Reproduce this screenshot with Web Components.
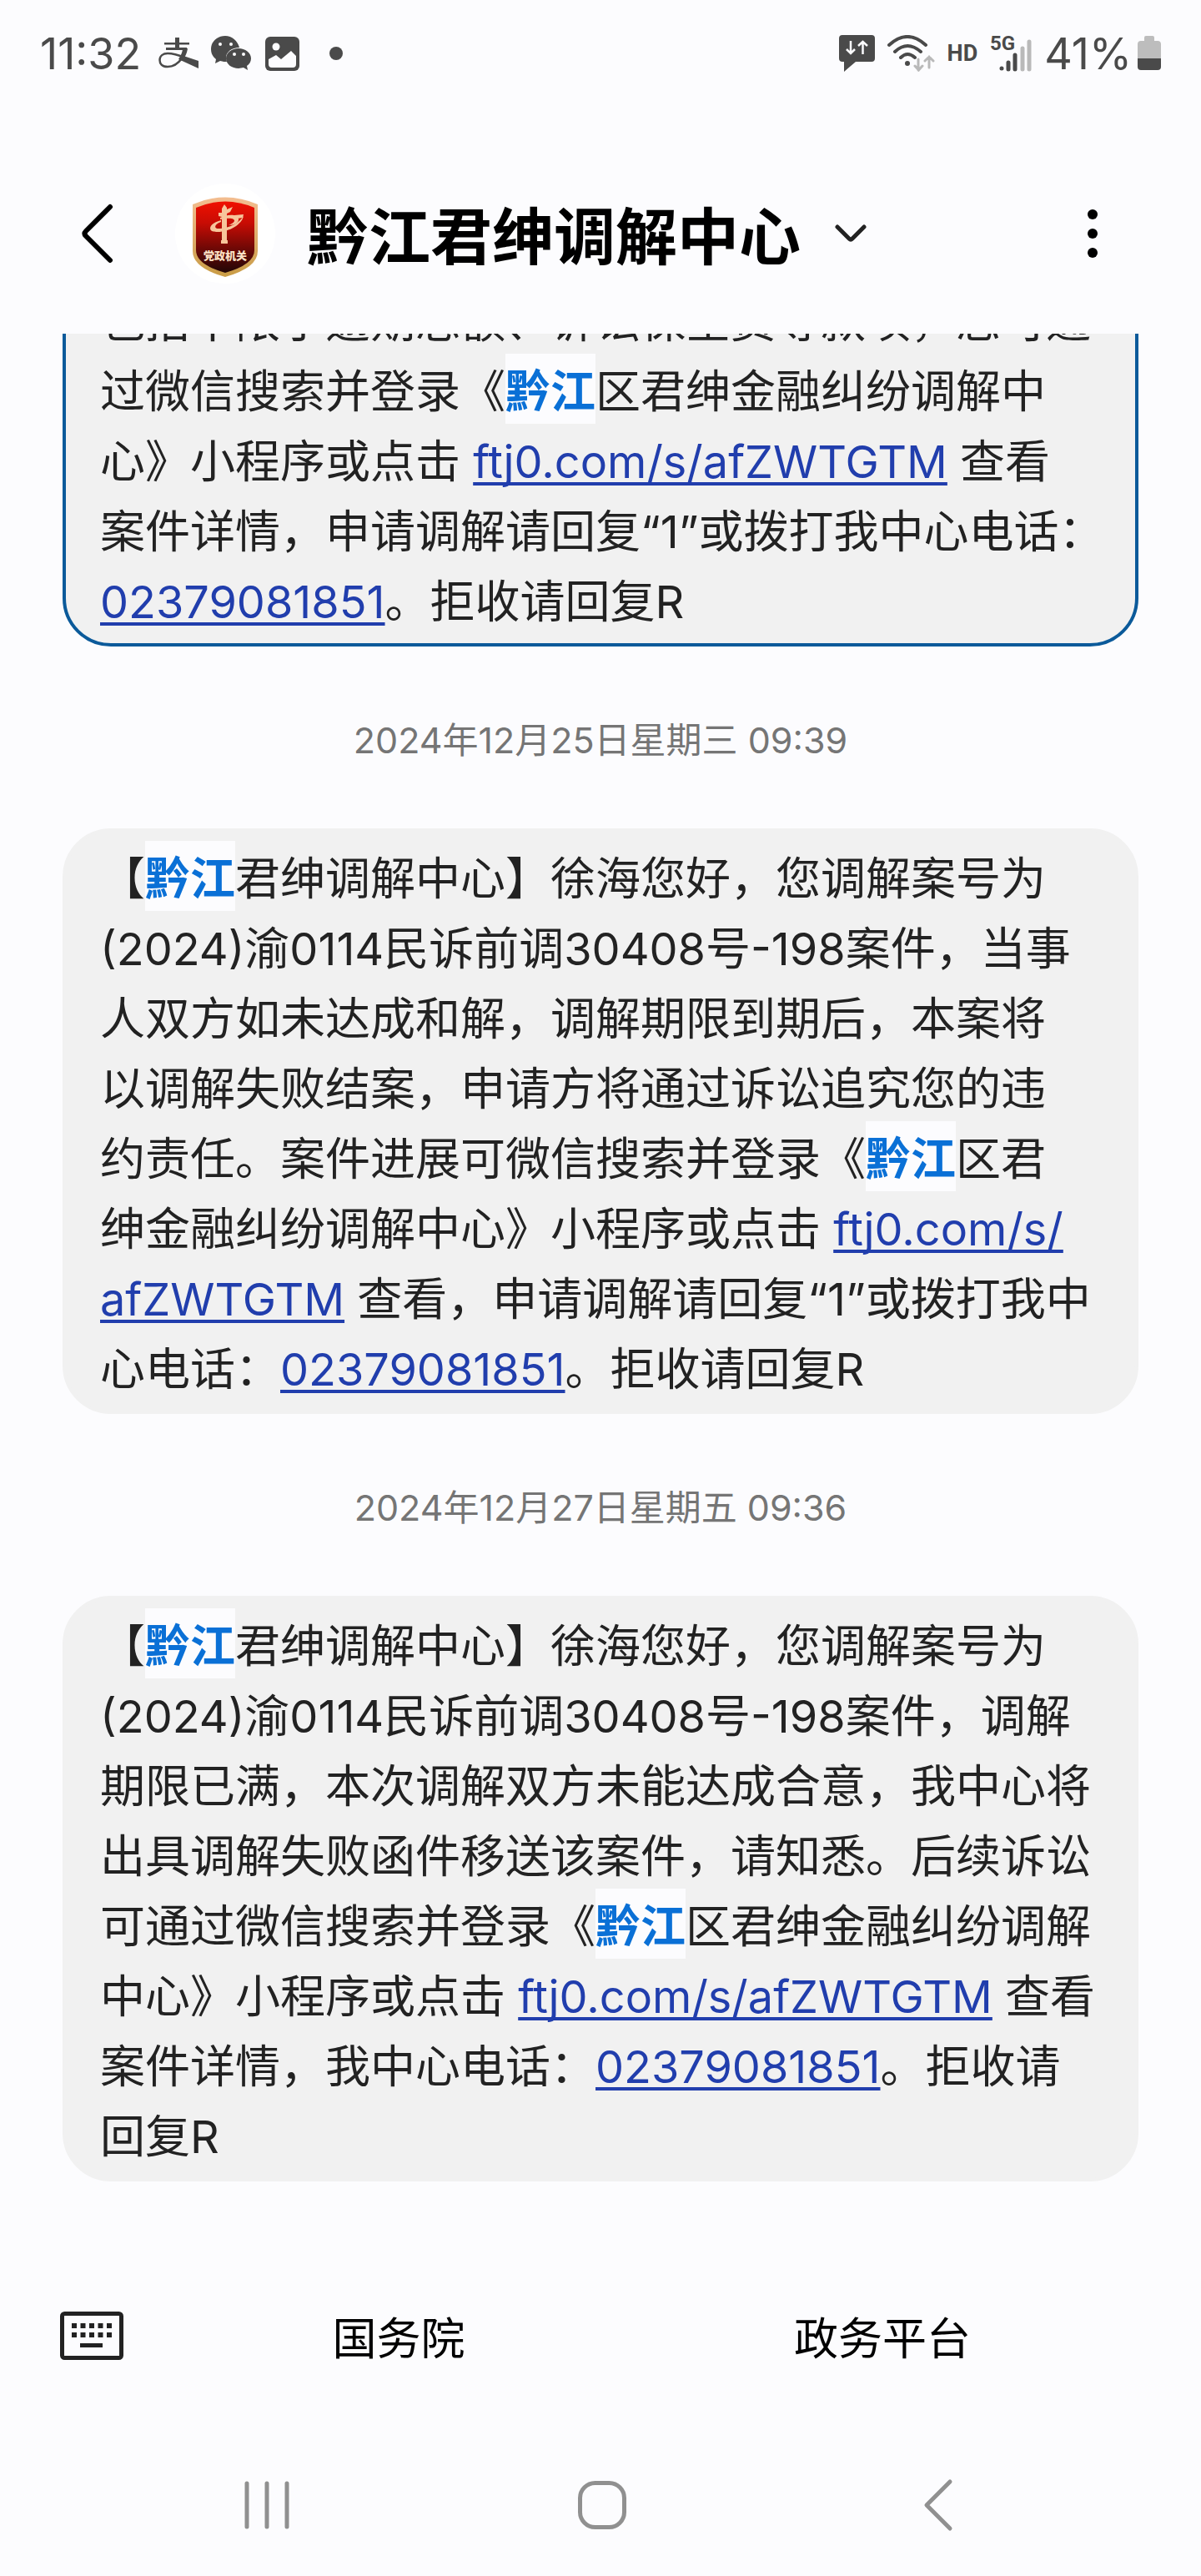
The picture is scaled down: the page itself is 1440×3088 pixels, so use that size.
<!DOCTYPE html>
<html lang="zh-CN">
<head>
<meta charset="utf-8">
<meta name="viewport" content="width=device-width, initial-scale=1">
<title>黔江君绅调解中心</title>
<style>
    body {
        margin: 0;
        height: 100vh;
        display: flex;
        flex-direction: column;
        background: #fcfcfe;
        color: #222;
        font-family: Inter, "Noto Sans CJK SC", sans-serif;
        text-spacing-trim: space-all;
    }
    message-thread { flex: 1; min-height: 0; }
</style>
</head>
<body>
    <status-bar time="11:32" battery="41%"></status-bar>
    <chat-header>黔江君绅调解中心</chat-header>

    <message-thread>
        <message-bubble selected>包括不限于逾期总额、诉讼保全费等款项，您可通<br>
            过微信搜索并登录《<mark>黔江</mark>区君绅金融纠纷调解中<br>
            心》小程序或点击 <a href="#case">ftj0.com/s/afZWTGTM</a> 查看<br>
            案件详情，申请调解请回复“1”或拨打我中心电话：<br>
            <a href="tel:02379081851">02379081851</a>。拒收请回复R</message-bubble>

        <date-stamp>2024年12月25日星期三 09:39</date-stamp>

        <message-bubble>【<mark>黔江</mark>君绅调解中心】徐海您好，您调解案号为<br>
            (2024)渝0114民诉前调30408号-198案件，当事<br>
            人双方如未达成和解，调解期限到期后，本案将<br>
            以调解失败结案，申请方将通过诉讼追究您的违<br>
            约责任。案件进展可微信搜索并登录《<mark>黔江</mark>区君<br>
            绅金融纠纷调解中心》小程序或点击 <a href="#case">ftj0.com/s/<br>afZWTGTM</a> 查看，申请调解请回复“1”或拨打我中<br>
            心电话：<a href="tel:02379081851">02379081851</a>。拒收请回复R</message-bubble>

        <date-stamp>2024年12月27日星期五 09:36</date-stamp>

        <message-bubble>【<mark>黔江</mark>君绅调解中心】徐海您好，您调解案号为<br>
            (2024)渝0114民诉前调30408号-198案件，调解<br>
            期限已满，本次调解双方未能达成合意，我中心将<br>
            出具调解失败函件移送该案件，请知悉。后续诉讼<br>
            可通过微信搜索并登录《<mark>黔江</mark>区君绅金融纠纷调解<br>
            中心》小程序或点击 <a href="#case">ftj0.com/s/afZWTGTM</a> 查看<br>
            案件详情，我中心电话：<a href="tel:02379081851">02379081851</a>。拒收请<br>
            回复R</message-bubble>
    </message-thread>

    <quick-menu>
        <menu-item>国务院</menu-item>
        <menu-item>政务平台</menu-item>
    </quick-menu>
    <nav-bar></nav-bar>

<script>
    const buttonReset = `
        button {
            margin: 0; padding: 0; border: none; background: none;
            color: inherit; font: inherit; cursor: pointer;
            display: flex; align-items: center; justify-content: center;
        }
        svg { display: block; }
    `;

    class StatusBar extends HTMLElement {
        constructor() {
            super();
            this.attachShadow({ mode: 'open' });
            this.shadowRoot.innerHTML = `
                <style>
                    :host {
                        display: flex; align-items: center; justify-content: space-between;
                        height: 128px; padding: 0 48px; color: #4a4a4a; font-size: 52px;
                    }
                    div { display: flex; align-items: center; gap: 15px; }
                    .time { margin-right: 6px; }
                    .more { margin-left: 20px; }
                    .hd { font: bold 27px Roboto, sans-serif; }
                    .power { gap: 7px; }
                    svg { display: block; fill: currentColor; }
                    .line { fill: none; stroke: currentColor; stroke-linecap: round; }
                    .dim { color: #b9b9b9; }
                </style>
                <div>
                    <span class="time"></span>
                    <svg width="48" height="38" viewBox="0 0 48 38">
                        <path d="M20 0h5v14h-5zM7 6h30v2.500H7zM9 12h25v3H9z"/>
                        <path d="M29 13h6C34 20 31 25 28 28l-4-2c3-5 5-9 5-13zM27 21l21 7v9L24 26z"/>
                        <path fill="none" stroke="currentColor" stroke-width="2.500" d="M28 25C23 32 18 35 11 35 4 35 1.500 31 1.500 27c0-5 4-8 9.500-8 7 0 13 2 20 5"/>
                    </svg>
                    <svg width="50" height="42" viewBox="0 0 50 42">
                        <path d="M17 0C7 0 0 7 0 16c0 5 2 9 6 12l-1 5 6-3c3 1 6 1 8 1-4-9 4-17 15-17C32 6 25 0 17 0z"/>
                        <path d="M33 15c-8 0-15 5-15 12s7 12 15 12l6-1 5 3-1-5c3-2 5-5 5-9 0-7-7-12-15-12z"/>
                        <g fill="#fcfcfe"><circle cx="11" cy="10" r="2"/><circle cx="24" cy="10" r="2"/><circle cx="28" cy="22" r="2"/><circle cx="39" cy="22" r="2"/></g>
                    </svg>
                    <svg width="42" height="42" viewBox="0 0 42 42">
                        <rect width="41" height="41" y="1" rx="6"/>
                        <circle cx="13" cy="13" r="4.500" fill="#fcfcfe"/>
                        <path fill="#fcfcfe" d="M4 28l9-5 6 5 12-10 6 6v10q0 4-4 4H8q-4 0-4-4z"/>
                    </svg>
                    <svg class="more" width="16" height="16"><circle cx="8" cy="8" r="8"/></svg>
                </div>
                <div>
                    <svg width="43" height="46" viewBox="0 0 43 46">
                        <path d="M4 1h35q4 0 4 4v24q0 4-4 4H20L6 45V33H4q-4 0-4-4V5q0-4 4-4z"/>
                        <path fill="none" stroke="#fcfcfe" stroke-width="2.500" d="M14 8v15M9 18l5 5 5-5M28.500 24V9M23 14l5.500-5 5.500 5"/>
                    </svg>
                    <svg width="57" height="44" viewBox="0 0 57 44">
                        <g class="line" stroke-width="4">
                            <path d="M2 12q22-20 44 0M9 20q15-14 31 0M16 27q8-8 17 0"/>
                        </g>
                        <circle cx="24" cy="34" r="3"/>
                        <g class="line dim" stroke-width="3"><path d="M37 29v13M33 37l4.500 5 4.500-5M50 39V26M45 31l5-5 5 5"/></g>
                    </svg>
                    <span class="hd">HD</span>
                    <svg width="50" height="62" viewBox="0 -8 50 62">
                        <text x="0" y="19" font-family="Roboto, sans-serif" font-weight="bold" font-size="24">5G</text>
                        <g class="line" stroke-width="5"><path d="M14 41v0M22 34v8M30 25v17"/></g>
                        <g class="line dim" stroke-width="5"><path d="M39 17v25M47 9v33"/></g>
                    </svg>
                    <div class="power">
                        <span class="battery"></span>
                        <svg width="28" height="42" viewBox="0 0 28 42">
                            <path fill="#bdbdbd" d="M8 6V2q0-2 2-2h8q2 0 2 2v4h4q4 0 4 4v17H0V10q0-4 4-4z"/>
                            <path d="M0 27h28v10q0 4-4 4H4q-4 0-4-4z"/>
                        </svg>
                    </div>
                </div>
            `;
        }

        connectedCallback() {
            this.shadowRoot.querySelector('.time').textContent = this.getAttribute('time');
            this.shadowRoot.querySelector('.battery').textContent = this.getAttribute('battery');
        }
    }

    class ShieldAvatar extends HTMLElement {
        constructor() {
            super();
            this.attachShadow({ mode: 'open' });
            this.shadowRoot.innerHTML = `
                <style>
                    :host {
                        display: flex; align-items: center; justify-content: center;
                        width: 120px; height: 120px; border-radius: 50%; background: #fff;
                    }
                </style>
                <svg width="78" height="104" viewBox="0 -8 78 104">
                    <defs>
                        <linearGradient id="red" x2="0" y2="1">
                            <stop offset="0" stop-color="#f01000"/><stop offset=".3" stop-color="#c80c04"/>
                            <stop offset=".7" stop-color="#650806"/><stop offset="1" stop-color="#210706"/>
                        </linearGradient>
                        <linearGradient id="gold" x2="0" y2="1">
                            <stop offset="0" stop-color="#f3bd90"/><stop offset="1" stop-color="#c99c45"/>
                        </linearGradient>
                    </defs>
                    <path fill="url(#gold)" d="M0 9Q39-8 78 9v56q0 20-39 31Q0 85 0 65z"/>
                    <path fill="url(#red)" d="M4 13Q39-2 74 13v51q0 17-35 27Q4 81 4 64z"/>
                    <g fill="#f7c59b">
                        <path d="M35 14l3-5 3 4v2l7-3-3 6-4 2v32h1v4h-8v-4h1V24l-4-1v-4h4z"/>
                        <path d="M34 28C18 32 17 43 30 42c14 0 29-9 31-19-6 9-17 14-28 15-8 1-8-5 1-8z"/>
                        <path d="M33 25c7-4 21-5 22 1 1 5-5 8-12 8 5-2 9-5 6-7s-10-1-16 0zM50 22l11-1-1 4-6 1z"/>
                    </g>
                    <text x="39" y="75" text-anchor="middle" fill="#fce0c4" font-family="Noto Sans CJK SC, sans-serif" font-weight="900" font-size="13">党政机关</text>
                </svg>
            `;
        }
    }

    class ChatHeader extends HTMLElement {
        constructor() {
            super();
            this.attachShadow({ mode: 'open' });
            this.shadowRoot.innerHTML = `
                <style>
                    ${buttonReset}
                    :host {
                        display: flex; align-items: center; box-sizing: border-box;
                        height: 272px; padding: 32px 70px 0; color: #000;
                    }
                    .back { width: 92px; height: 92px; margin-right: 48px; }
                    h1 { margin: 0 38px; padding-top: 8px; font-size: 74px; line-height: 96px; font-weight: bold; }
                    .more { width: 80px; height: 92px; margin-left: auto; margin-right: 20px; }
                </style>
                <button class="back" aria-label="返回">
                    <svg width="40" height="72" fill="none" stroke="currentColor" stroke-width="6" stroke-linecap="round" stroke-linejoin="round"><path d="M36 4L7 33q-3 3 0 6l29 29"/></svg>
                </button>
                <shield-avatar></shield-avatar>
                <h1><slot></slot></h1>
                <button class="expand" aria-label="展开">
                    <svg width="44" height="24" fill="none" stroke="#222" stroke-width="5" stroke-linecap="round" stroke-linejoin="round"><path d="M6 4l14 14q2 2 4 0L38 4"/></svg>
                </button>
                <button class="more" aria-label="更多">
                    <svg width="12" height="60" fill="currentColor"><circle cx="6" cy="7" r="6"/><circle cx="6" cy="30" r="6"/><circle cx="6" cy="53" r="6"/></svg>
                </button>
            `;
        }
    }

    // Keeps the newest message at the bottom, older ones slide under the header
    class MessageThread extends HTMLElement {
        constructor() {
            super();
            this.attachShadow({ mode: 'open' });
            this.shadowRoot.innerHTML = `
                <style>
                    :host {
                        display: flex; flex-direction: column; justify-content: flex-end;
                        overflow: hidden; padding: 0 75px 67px;
                    }
                </style>
                <slot></slot>
            `;
        }
    }

    class MessageBubble extends HTMLElement {
        constructor() {
            super();
            this.attachShadow({ mode: 'open' });
            this.shadowRoot.innerHTML = `
                <style>
                    :host {
                        display: block; flex: none; padding: 15px 30px 7px 41px;
                        border: 4px solid #f1f1f1; border-radius: 58px;
                        background: #f1f1f1; font-size: 54px; line-height: 84px;
                    }
                    :host([selected]) { border-color: #0b5a9a; }
                    ::slotted(mark) {
                        display: inline-block; margin-top: -8px; padding-top: 8px;
                        background: #fcfcfe; color: #0a70d6; font-weight: bold; line-height: 76px;
                    }
                    ::slotted(a) {
                        color: #213ead; text-decoration: underline 4px;
                        text-underline-offset: 5px; text-decoration-skip-ink: none;
                    }
                </style>
                <slot></slot>
            `;
        }
    }

    class DateStamp extends HTMLElement {
        constructor() {
            super();
            this.attachShadow({ mode: 'open' });
            this.shadowRoot.innerHTML = `
                <style>
                    :host {
                        display: block; flex: none; padding: 82px 0 76px; text-align: center;
                        color: #757575; font-size: 43px; line-height: 60px;
                    }
                </style>
                <slot></slot>
            `;
        }
    }

    class QuickMenu extends HTMLElement {
        constructor() {
            super();
            this.attachShadow({ mode: 'open' });
            this.shadowRoot.innerHTML = `
                <style>
                    ${buttonReset}
                    :host { display: flex; align-items: center; height: 236px; padding: 0 92px 0 72px; }
                    .keyboard { width: 116px; justify-content: flex-start; }
                </style>
                <button class="keyboard" aria-label="键盘">
                    <svg width="76" height="58" fill="#222">
                        <rect x="2.500" y="2.500" width="71" height="53" rx="3" fill="none" stroke="#222" stroke-width="5"/>
                        <g stroke="#222" stroke-width="6" stroke-dasharray="6 4.500"><path d="M14 17h48M14 28h48"/></g>
                        <rect x="24" y="38" width="27" height="5"/>
                    </svg>
                </button>
                <slot></slot>
            `;
        }
    }

    class MenuItem extends HTMLElement {
        constructor() {
            super();
            this.attachShadow({ mode: 'open' });
            this.shadowRoot.innerHTML = `
                <style>
                    ${buttonReset}
                    :host { display: block; flex: 1; color: #000; font-size: 53px; line-height: 80px; }
                    button { width: 100%; padding-top: 8px; }
                </style>
                <button><slot></slot></button>
            `;
        }
    }

    class NavBar extends HTMLElement {
        constructor() {
            super();
            this.attachShadow({ mode: 'open' });
            this.shadowRoot.innerHTML = `
                <style>
                    ${buttonReset}
                    :host { display: flex; height: 170px; padding: 0 114px 0 119px; }
                    button { flex: 1; }
                    svg { fill: none; stroke: #909090; stroke-width: 5; stroke-linecap: round; stroke-linejoin: round; }
                </style>
                <button aria-label="最近任务">
                    <svg width="54" height="60"><path d="M3 4v52M27 4v52M51 4v52"/></svg>
                </button>
                <button aria-label="主页">
                    <svg width="60" height="60"><rect x="3.500" y="3.500" width="53" height="53" rx="18"/></svg>
                </button>
                <button aria-label="返回">
                    <svg width="36" height="64"><path d="M32 4L4 32l28 28"/></svg>
                </button>
            `;
        }
    }

    customElements.define('status-bar', StatusBar);
    customElements.define('shield-avatar', ShieldAvatar);
    customElements.define('chat-header', ChatHeader);
    customElements.define('message-thread', MessageThread);
    customElements.define('message-bubble', MessageBubble);
    customElements.define('date-stamp', DateStamp);
    customElements.define('quick-menu', QuickMenu);
    customElements.define('menu-item', MenuItem);
    customElements.define('nav-bar', NavBar);
</script>
</body>
</html>
